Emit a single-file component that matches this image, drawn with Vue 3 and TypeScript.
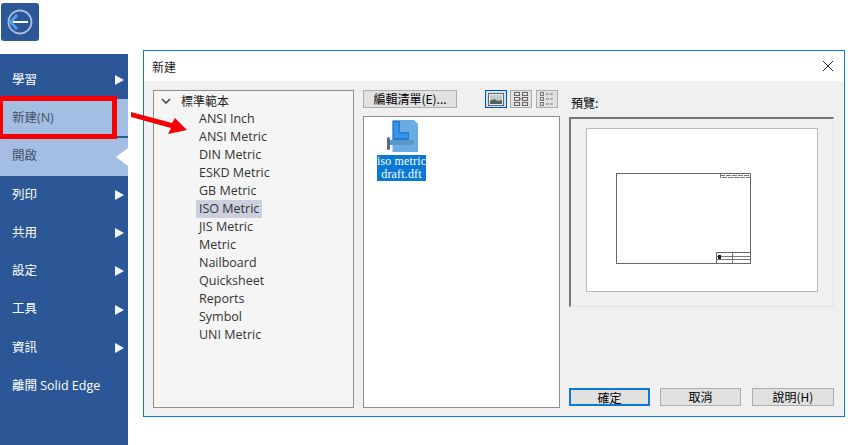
<script setup lang="ts">
const menu: { label: string; arrow: boolean; cls?: string }[] = [
  { label: '學習', arrow: true },
  { label: '新建(N)', arrow: false, cls: 'light' },
  { label: '開啟', arrow: false, cls: 'light open' },
  { label: '列印', arrow: true },
  { label: '共用', arrow: true },
  { label: '設定', arrow: true },
  { label: '工具', arrow: true },
  { label: '資訊', arrow: true },
  { label: '離開 Solid Edge', arrow: false },
]
const templates = ['ANSI Inch', 'ANSI Metric', 'DIN Metric', 'ESKD Metric', 'GB Metric', 'ISO Metric', 'JIS Metric', 'Metric', 'Nailboard', 'Quicksheet', 'Reports', 'Symbol', 'UNI Metric']
</script>

<template>
  <div class="page">
    <header class="top">
      <div class="back">
        <svg width="36" height="36" viewBox="0 0 36 36" fill="none">
          <circle cx="18" cy="18" r="11.5" stroke="#a9bedd" stroke-width="1.8" />
          <path d="M15 11 L8.500 18 L15 25" stroke="#4f9fee" stroke-width="2.8" />
          <path d="M11 18 H26" stroke="#fff" stroke-width="2" />
        </svg>
      </div>
    </header>

    <nav class="side">
      <div v-for="m in menu" :key="m.label" class="item" :class="m.cls">
        <span>{{ m.label }}</span>
        <i v-if="m.arrow" class="tri"></i>
      </div>
    </nav>

    <section class="dialog">
      <div class="title">
        <span>新建</span>
        <svg width="12" height="12" viewBox="0 0 12 12" class="close"><path d="M1 1 L11 11 M11 1 L1 11" stroke="#222" stroke-width="1" fill="none" /></svg>
      </div>
      <div class="body">
        <div class="tree">
          <div class="root">
            <svg width="10" height="6" viewBox="0 0 10 6" class="chev"><path d="M1 1 L5 5 L9 1" stroke="#444" stroke-width="1.6" fill="none" /></svg>
            <span>標準範本</span>
          </div>
          <div v-for="t in templates" :key="t" class="leaf"><span :class="{ sel: t === 'ISO Metric' }">{{ t }}</span></div>
        </div>

        <div class="mid">
          <div class="tools">
            <button class="btn edit">編輯清單(E)...</button>
            <div class="views">
              <div class="view active">
                <svg width="16" height="13" viewBox="0 0 16 13"><rect x=".5" y=".5" width="15" height="12" fill="#e8eef2" stroke="#666" /><rect x="2" y="2" width="12" height="9" fill="#c3cbc9" /><path d="M2 11 V8 L6 6 L10 8 L14 7 V11Z" fill="#56635f" /></svg>
              </div>
              <div class="view">
                <svg width="16" height="14" viewBox="0 0 16 14" fill="none" stroke="#666"><rect x="1.500" y=".5" width="5" height="3" /><rect x="1.500" y="5.500" width="5" height="3" /><rect x="1.500" y="10.500" width="5" height="3" /><rect x="9.500" y=".5" width="5" height="3" /><rect x="9.500" y="5.500" width="5" height="3" /><rect x="9.500" y="10.500" width="5" height="3" /><path d="M7 7 H9" stroke="#c0504d" /></svg>
              </div>
              <div class="view last">
                <svg width="16" height="14" viewBox="0 0 16 14" fill="none" stroke="#777"><rect x="1.500" y=".5" width="3" height="3" /><rect x="1.500" y="5.500" width="3" height="3" /><rect x="1.500" y="10.500" width="3" height="3" /><path d="M7 2 H15 M7 7 H15 M7 12 H15" stroke-dasharray="3 1" /></svg>
              </div>
            </div>
          </div>
          <div class="files">
            <div class="file">
              <svg class="ficon" width="32" height="32" viewBox="0 0 32 32">
                <path d="M5.500 0 H27 L31 4 V32 H5.500Z" fill="#6aabe4" />
                <path d="M5.500 1 H13 V12 H22 V20 H5.500Z" fill="#1d7fda" />
                <path d="M7 2.500 H11.500 V13.500 H20.500 V18 H7Z" fill="#3a95e6" />
                <rect x="1" y="20" width="26" height="5" fill="#5d97c9" />
                <rect x="0" y="17" width="3" height="13" rx="1.500" fill="#4f6d8c" />
              </svg>
              <div class="fname">iso metric<br />draft.dft</div>
            </div>
          </div>
        </div>

        <div class="right">
          <div class="plabel">預覽:</div>
          <div class="preview">
            <div class="sheet">
              <svg width="135" height="91" viewBox="0 0 135 91" fill="none">
                <rect x=".5" y=".5" width="134" height="90" stroke="#666" />
                <path d="M104.500 1 V5 M104 2.500 H134 M106 4.500 H134" stroke="#777" stroke-dasharray="5 1" />
                <rect x="100.500" y="79.500" width="34" height="11" fill="#fff" stroke="#666" />
                <path d="M100 83.500 H134 M100 86.500 H134 M116.500 80 V90" stroke="#777" />
                <rect x="102" y="82" width="3" height="4" fill="#222" />
              </svg>
            </div>
          </div>
          <div class="actions">
            <button class="btn def">確定</button>
            <button class="btn">取消</button>
            <button class="btn">說明(H)</button>
          </div>
        </div>
      </div>
    </section>

    <div class="redbox"></div>
    <svg class="arrow" width="60" height="30" viewBox="0 0 60 30"><path d="M1 2 L42 13 L45 8 L57 20 L38 24 L41 18 L1 7Z" fill="#f40000" /></svg>
  </div>
</template>

<style>
body { background: #fff; }
</style>

<style scoped>
.page {
  position: relative;
  width: 852px;
  height: 445px;
  overflow: hidden;
  display: grid;
  grid-template-columns: 128px 1fr;
  grid-template-rows: 54px 1fr;
  font-family: "Noto Sans CJK TC", "Noto Sans", sans-serif;
  background: #fff;
}
.top { grid-column: 1; grid-row: 1; padding: 3px 0 0 1px; }
.back {
  width: 38px; height: 38px;
  background: #2b5797;
  border-radius: 3px;
  display: flex; align-items: center; justify-content: center;
}
.side {
  grid-column: 1; grid-row: 2;
  background: #2b5797;
  padding-top: 7px;
  display: flex; flex-direction: column;
}
.item {
  height: 38.25px;
  display: flex; align-items: center; justify-content: space-between;
  padding: 0 3px 0 12px;
  color: #fff;
  font: 12.500px/1 "Open Sans", "Noto Sans CJK TC", sans-serif;
  position: relative;
  box-sizing: border-box;
}
.item.light { background: #a4bde3; color: #44506a; }
.item.light:not(.open) { box-shadow: inset 0 -2px 0 #2b5797; }
.tri {
  width: 0; height: 0;
  border-left: 9px solid #f2f5fa;
  border-top: 5.500px solid transparent;
  border-bottom: 5.500px solid transparent;
  margin-right: 1px;
}
.open::after {
  content: "";
  position: absolute;
  right: 0; top: 10px;
  border-right: 12px solid #fff;
  border-top: 9px solid transparent;
  border-bottom: 9px solid transparent;
}
.dialog {
  grid-column: 2; grid-row: 1 / 3;
  margin: 50px 7px 28px 15px;
  border: 1px solid #0b7bd6;
  display: flex; flex-direction: column;
  background: #f0f0f0;
  color: #000;
}
.title {
  height: 30px; background: #fff;
  display: flex; align-items: center; justify-content: space-between;
  padding: 0 10px 0 8px;
  font-size: 12px;
  color: #222;
}
.body {
  flex: 1;
  display: flex;
  padding: 9px 10px 8px 9px;
  min-height: 0;
}
.tree {
  width: 201px;
  box-sizing: border-box;
  border: 1px solid #8a8f98;
  background: #f5f5f5;
  margin-right: 9px;
  font: 12.500px/18px "Open Sans", sans-serif;
  color: #333;
}
.root {
  height: 19px;
  display: flex; align-items: center;
  font: 12px/18px "Noto Sans CJK TC", sans-serif;
  color: #222;
}
.chev { margin: 0 10px 0 7px; }
.leaf { height: 18px; padding-left: 45px; }
.leaf span { display: inline-block; padding: 0 3px; margin-left: -3px; }
.leaf .sel { background: #ccd0de; }
.mid { width: 197px; margin-right: 9px; display: flex; flex-direction: column; }
.tools { height: 18px; display: flex; justify-content: space-between; margin-bottom: 8px; }
.btn {
  box-sizing: border-box;
  height: 18px;
  padding: 0;
  border: 1px solid #adadad;
  background: #e1e1e1;
  color: #000;
  font: 12px/16px "Noto Sans CJK TC", sans-serif;
}
.edit { width: 94px; }
.views { display: flex; gap: 3px; margin-right: 2px; }
.view {
  box-sizing: border-box;
  width: 22px; height: 18px;
  border: 1px solid #adadad;
  background: #e1e1e1;
  display: flex; align-items: center; justify-content: center;
}
.view.last { margin-left: 1px; }
.view.active { border-color: #005499; background: #cce4f7; }
.files {
  flex: 1;
  box-sizing: border-box;
  border: 1px solid #8a8f98;
  background: #fff;
}
.file { width: 49px; margin-left: 13px; display: flex; flex-direction: column; align-items: flex-start; padding-top: 3px; }
.ficon { margin-left: 10px; }
.fname {
  width: 49px;
  margin-top: 3px;
  background: #0a78d4;
  color: #fff;
  font: 12px/13px "Liberation Serif", serif;
  letter-spacing: 0.15px;
  text-align: center;
  white-space: nowrap;
}
.right { flex: 1; display: flex; flex-direction: column; }
.plabel { font-size: 12px; line-height: 14px; height: 14px; margin: 8px 0 5px 2px; position: relative; top: -2px; }
.preview {
  box-sizing: border-box;
  height: 190px;
  width: 265px;
  border: 1px solid #e3e3e3;
  border-top: 2px solid #777;
  border-left: 2px solid #777;
  padding: 9px 15px 14px 15px;
}
.sheet {
  box-sizing: border-box;
  height: 100%;
  background: #fff;
  border: 1px solid #bbb;
  display: flex; align-items: flex-start;
  padding: 44px 0 0 29px;
}
.sheet svg { flex: none; }
.actions { margin-top: auto; margin-bottom: 2px; display: flex; gap: 10px; width: 265px; }
.actions .btn { width: 81px; }
.actions .btn:nth-child(3) { width: 82px; margin-left: 1px; }
.btn.def { border: 2px solid #0a78d4; }
.redbox {
  position: absolute;
  left: 0; top: 96px;
  width: 117px; height: 43px;
  box-sizing: border-box;
  border: 5px solid #f60000;
  border-left-width: 3px;
}
.arrow { position: absolute; left: 130px; top: 110px; }
</style>
